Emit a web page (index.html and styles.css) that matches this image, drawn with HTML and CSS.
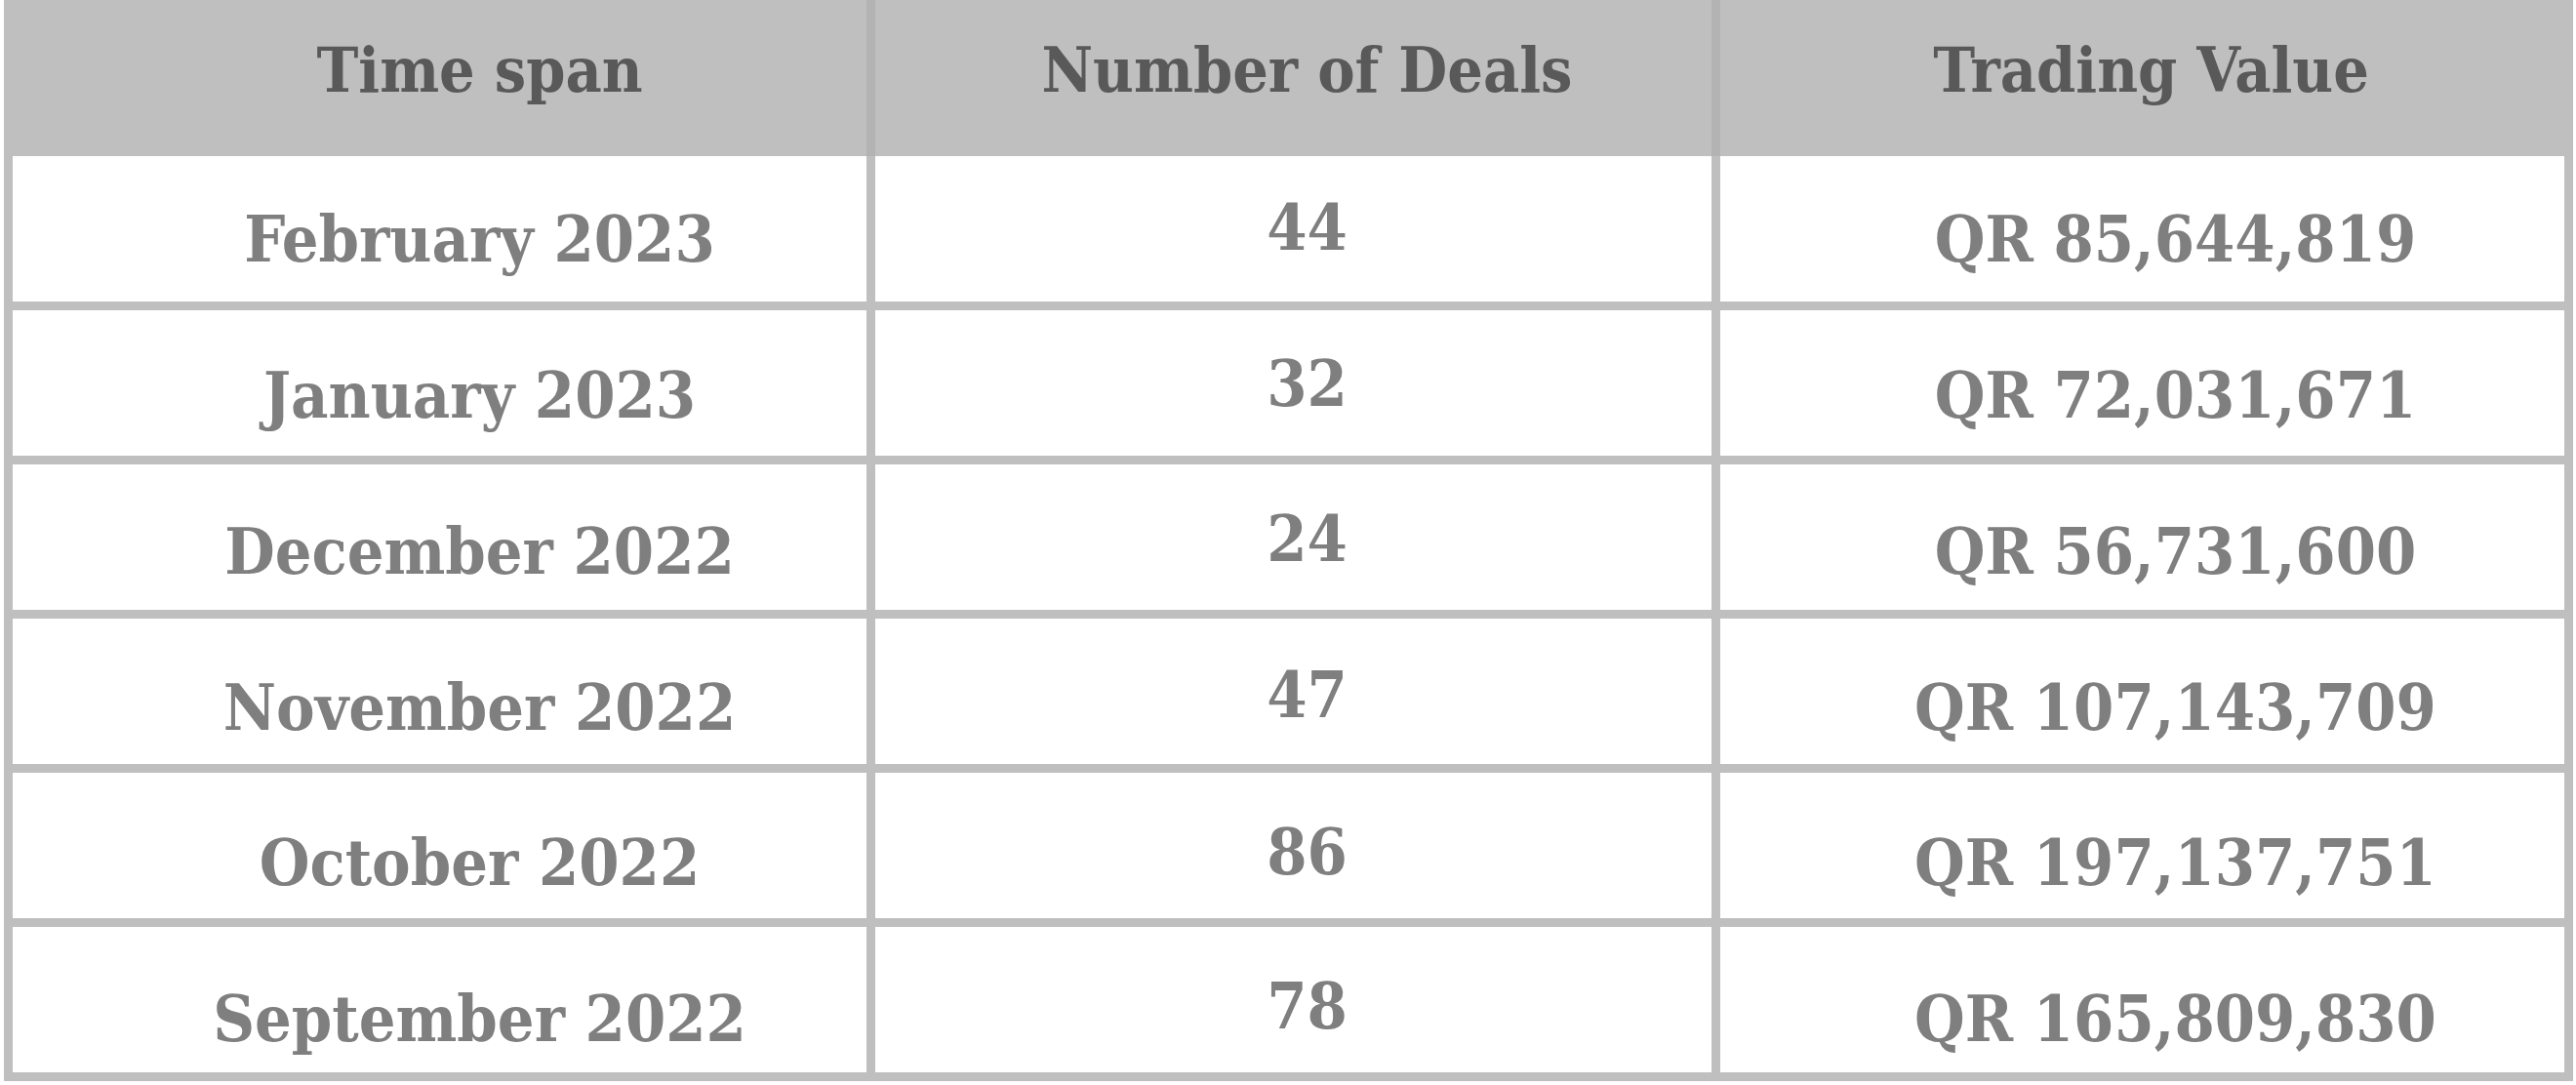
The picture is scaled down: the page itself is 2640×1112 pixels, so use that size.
FILE: index.html
```html
<!DOCTYPE html>
<html lang="en">
<head>
<meta charset="utf-8">
<title>Deals</title>
<link rel="stylesheet" href="styles.css">
</head>
<body>
<div class="table">
  <div class="head">
    <div class="hcell c1">Time span</div>
    <div class="hcell c2">Number of Deals</div>
    <div class="hcell c3">Trading Value</div>
  </div>
  <div class="grid">
    <div class="row">
      <div class="cell c1">February 2023</div>
      <div class="cell c2">44</div>
      <div class="cell c3">QR 85,644,819</div>
    </div>
    <div class="row">
      <div class="cell c1">January 2023</div>
      <div class="cell c2">32</div>
      <div class="cell c3">QR 72,031,671</div>
    </div>
    <div class="row">
      <div class="cell c1">December 2022</div>
      <div class="cell c2">24</div>
      <div class="cell c3">QR 56,731,600</div>
    </div>
    <div class="row">
      <div class="cell c1">November 2022</div>
      <div class="cell c2">47</div>
      <div class="cell c3">QR 107,143,709</div>
    </div>
    <div class="row">
      <div class="cell c1">October 2022</div>
      <div class="cell c2">86</div>
      <div class="cell c3">QR 197,137,751</div>
    </div>
    <div class="row">
      <div class="cell c1">September 2022</div>
      <div class="cell c2">78</div>
      <div class="cell c3">QR 165,809,830</div>
    </div>
  </div>
</div>
</body>
</html>
```
FILE: styles.css
```css
html, body {
  margin: 0;
  padding: 0;
  background: #ffffff;
}
body {
  font-family: "DejaVu Serif", "Liberation Serif", serif;
  font-weight: bold;
  font-stretch: condensed;
}
.table {
  margin-left: 4px;
  width: 2633px;
  background: #bfbfbf;
}
.head {
  display: flex;
  height: 160px;
  padding: 0 9px;
  box-sizing: border-box;
}
.hcell {
  display: flex;
  align-items: center;
  justify-content: center;
  box-sizing: border-box;
  height: 160px;
  padding-bottom: 16px;
  color: #595959;
  font-size: 64px;
  line-height: 1;
}
.hcell.c1 { width: 884px; border-right: 9px solid #b3b3b3; padding-left: 82px; }
.hcell.c2 { width: 866px; border-right: 9px solid #b3b3b3; padding-left: 28px; }
.hcell.c3 { width: 865px; padding-left: 18px; }
.grid {
  display: grid;
  grid-template-columns: 875px 857px 865px;
  grid-auto-rows: 149px;
  gap: 9px;
  padding: 0 9px 9px 9px;
}
.row {
  display: contents;
  --y1: 14px;
  --y2: 2px;
}
.row:nth-child(1) { --y1: 10px; --y2: -2px; }
.row:nth-child(2) { --y1: 12px; --y2: 0px; }
.row:nth-child(3) { --y1: 14px; --y2: 1px; }
.row:nth-child(4) { --y1: 16px; --y2: 3px; }
.row:nth-child(5) { --y1: 17px; --y2: 6px; }
.row:nth-child(6) { --y1: 19px; --y2: 6px; }
.cell {
  background: #ffffff;
  color: #7f7f7f;
  font-size: 66px;
  line-height: 1;
  display: flex;
  align-items: center;
  justify-content: center;
  box-sizing: border-box;
}
.cell.c1 {
  padding-left: 82px;
  padding-top: calc(20px + var(--y1));
  padding-bottom: calc(20px - var(--y1));
}
.cell.c2 {
  padding-left: 28px;
  padding-top: calc(20px + var(--y2));
  padding-bottom: calc(20px - var(--y2));
}
.cell.c3 {
  padding-left: 68px;
  padding-top: calc(20px + var(--y1));
  padding-bottom: calc(20px - var(--y1));
}
```
